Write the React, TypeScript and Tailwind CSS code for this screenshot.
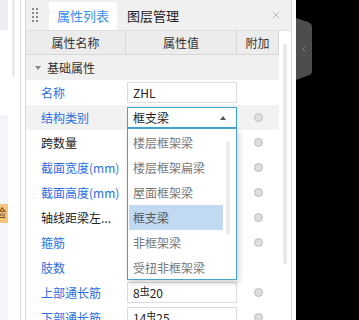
import { ChevronLeft, X } from "lucide-react";

type Row = {
  label: string;
  blue: boolean;
  value?: string;
  radio?: boolean;
  hover?: boolean;
  select?: boolean;
};

const rows: Row[] = [
  { label: "名称", blue: true, value: "ZHL" },
  { label: "结构类别", blue: true, select: true, radio: true, hover: true },
  { label: "跨数量", blue: false, value: "", radio: true },
  { label: "截面宽度(mm)", blue: true, value: "", radio: true },
  { label: "截面高度(mm)", blue: true, value: "", radio: true },
  { label: "轴线距梁左...", blue: false, value: "", radio: true },
  { label: "箍筋", blue: true, value: "", radio: true },
  { label: "肢数", blue: true, value: "" },
  { label: "上部通长筋", blue: true, value: "8|20", radio: true },
  { label: "下部通长筋", blue: true, value: "14|25", radio: true },
];

const options = ["楼层框架梁", "楼层框架扁梁", "屋面框架梁", "框支梁", "非框架梁", "受扭非框架梁"];

function Rebar({ v }: { v: string }) {
  const [a, b] = v.split("|");
  if (b === undefined) return <>{a}</>;
  return (
    <>
      {a}
      <span className="text-[10px] relative -top-[2px]">虫</span>
      {b}
    </>
  );
}

export default function App() {
  return (
    <div
      className="relative flex w-[359px] h-[320px] overflow-hidden bg-white text-[12px] text-[#333]"
      style={{ fontFamily: '"Noto Sans CJK SC", "Noto Sans", sans-serif' }}
    >
      {/* left strip from the page behind */}
      <div className="relative w-[21px] shrink-0 border-r border-[#dedede] bg-white">
        <div className="w-[8px] h-[30px] bg-[#eceef2]" />
        <div className="absolute left-[12px] top-0 w-[3px] h-[77px] rounded-b bg-[#ebebeb]" />
        <div className="absolute left-0 top-[115px] w-[8px] h-[205px] bg-[#f4f5f8]" />
        <div className="absolute left-0 top-[204px] w-[8px] h-[19px] bg-[#f3c578] overflow-hidden">
          <span className="absolute -left-[6px] top-[1px] text-[12px] leading-[16px] text-[#6b3c0c]">验</span>
        </div>
      </div>
      <div className="w-[4px] shrink-0" />

      {/* property panel */}
      <div className="w-[267px] shrink-0 border-x border-[#d8d8d8] bg-white flex flex-col">
        <div className="h-[31px] shrink-0 flex items-end bg-[#f0f0f0] border-b border-[#e0e0e0] text-[13px]">
          <div className="w-[23px] h-full grid grid-cols-2 content-center justify-center gap-x-[2px] gap-y-[2px] pl-[6px] pr-[11px]">
            {Array.from({ length: 8 }).map((_, i) => (
              <span key={i} className="w-[2px] h-[2px] bg-[#8a8a8a]" />
            ))}
          </div>
          <div className="w-[68px] h-[28px] bg-white text-[#3a8ef0] flex items-center justify-center">属性列表</div>
          <div className="ml-[10px] h-[28px] flex items-center text-[#222]">图层管理</div>
          <div className="ml-auto mr-[9px] h-full flex items-center text-[#9a9a9a]">
            <X size={12} strokeWidth={1.3} />
          </div>
        </div>

        <div className="flex flex-1 min-h-0">
          <div className="w-[253px] shrink-0">
            {/* table header */}
            <div className="flex h-[24px] bg-[#ececec] border-b border-[#d6d6d6]">
              <div className="w-[100px] border-r border-[#d6d6d6] flex items-center justify-center">属性名称</div>
              <div className="w-[111px] border-r border-[#d6d6d6] flex items-center justify-center">属性值</div>
              <div className="flex-1 border-r border-[#d6d6d6] flex items-center justify-center">附加</div>
            </div>

            {/* group */}
            <div className="flex items-center h-[25px] bg-[#f0f0f0]">
              <span className="ml-[9px] mr-[6px] w-0 h-0 border-x-[3px] border-x-transparent border-t-[4px] border-t-[#888]" />
              <span>基础属性</span>
            </div>

            {rows.map((r) => (
              <div key={r.label} className={`flex items-center h-[25px] ${r.hover ? "bg-[#f2f2f2]" : ""}`}>
                <div className={`w-[101px] pl-[15px] whitespace-nowrap ${r.blue ? "text-[#2b6ee0]" : "text-[#222]"}`}>
                  {r.label}
                </div>
                <div className="w-[110px]">
                  {r.select ? (
                    <div className="h-[21px] border border-[#3aa6d6] bg-white flex items-center pl-[5px] pr-[10px] text-[#222]">
                      <span>框支梁</span>
                      <span className="ml-auto w-0 h-0 border-x-[3px] border-x-transparent border-b-[4px] border-b-[#555]" />
                    </div>
                  ) : r.value !== undefined ? (
                    <div className="h-[21px] border border-[#dcdcdc] bg-white flex items-center pl-[5px] text-[#222]">
                      <Rebar v={r.value} />
                    </div>
                  ) : null}
                </div>
                <div className="flex-1 flex justify-center">
                  {r.radio && <span className="w-[9px] h-[9px] rounded-full border border-[#bdbdbd] bg-[#dedede]" />}
                </div>
              </div>
            ))}
          </div>
          <div className="flex-1 flex justify-center pt-[13px]">
            <div className="w-[4px] h-[220px] rounded-full bg-[#e8e8e8]" />
          </div>
        </div>
      </div>
      <div className="w-[4px] shrink-0" />

      {/* dark area */}
      <div className="relative flex-1 bg-black">
        <svg className="absolute left-0 top-[18px]" width="17" height="63" viewBox="0 0 17 63">
          <path d="M0 0 L12 4 Q16 5.5 16 9 L16 53 Q16 56.5 12 57.5 L0 62 Z" fill="#4d4d4d" />
        </svg>
        <ChevronLeft className="absolute left-[3px] top-[44px] text-[#9c9c9c]" size={10} strokeWidth={1.5} />
      </div>

      {/* open dropdown */}
      <div className="absolute left-[127px] top-[128px] w-[110px] h-[152px] border border-[#4aa3c7] bg-white shadow-[2px_3px_6px_rgba(0,0,0,0.18)]">
        <div className="absolute right-[6px] top-[12px] w-[4px] h-[94px] rounded-full bg-[#ececec]" />
        <div className="pt-[1px] pl-[1px] pr-[13px]">
          {options.map((o) => (
            <div
              key={o}
              className={`h-[25px] flex items-center pl-[4px] ${o === "框支梁" ? "bg-[#c2daf1] text-[#555]" : "text-[#777]"}`}
            >
              {o}
            </div>
          ))}
        </div>
      </div>
    </div>
  );
}
